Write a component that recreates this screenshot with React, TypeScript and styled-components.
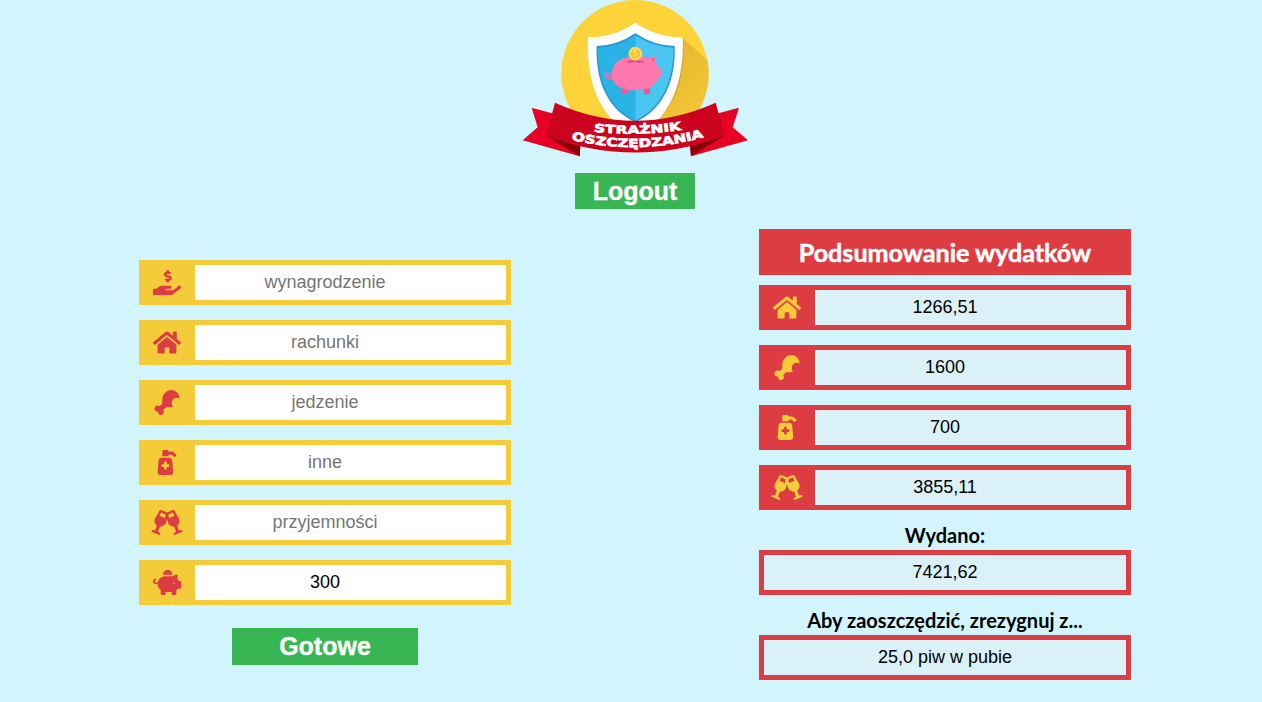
import React from "react";
import styled, { createGlobalStyle } from "styled-components";
import {
  FaDrumstickBite,
  FaGlassCheers,
  FaHandHoldingUsd,
  FaHome,
  FaPiggyBank,
  FaPumpMedical,
} from "react-icons/fa";

const RED = "#de3c43";
const YELLOW = "#f4cb39";
const GREEN = "#38b653";

const GlobalStyle = createGlobalStyle`
  *, *::before, *::after { box-sizing: border-box; }
  html { overflow: hidden; }
  body {
    margin: 0;
    background: #d2f4fd;
    color: #000;
    font-family: Lato, sans-serif;
  }
`;

const Page = styled.div`
  width: 1262px;
  height: 702px;
  padding-left: 15px;
  overflow: hidden;
`;

const Header = styled.header`
  display: flex;
  flex-direction: column;
  align-items: center;
  width: 1240px;
`;

const LogoImage = styled.svg`
  display: block;
  width: 240px;
  height: 160px;
`;

const Button = styled.button<{ $width: number; $height: number }>`
  display: flex;
  align-items: center;
  justify-content: center;
  width: ${(p) => p.$width}px;
  height: ${(p) => p.$height}px;
  padding: 0;
  border: 0;
  background: ${GREEN};
  color: #fff;
  font: bold 25px "Liberation Sans", Arial, sans-serif;
  -webkit-text-stroke: 0.3px #fff;
`;

const LogoutButton = styled(Button)`
  margin-top: 13px;
`;

const SubmitButton = styled(Button)`
  margin: 23px auto 0;
`;

const Columns = styled.main`
  display: grid;
  grid-template-columns: 620px 620px;
`;

const Form = styled.form`
  width: 372px;
  margin: 51px auto 0;
`;

const Summary = styled.section`
  width: 372px;
  margin: 20px auto 0;
`;

const SummaryTitle = styled.h2`
  margin: 0 0 10px;
  height: 46px;
  background: ${RED};
  color: #fff;
  font-size: 25.1px;
  font-weight: 700;
  line-height: 47px;
  text-align: center;
  -webkit-text-stroke: 0.5px #fff;
`;

const Row = styled.label<{ $frame: string; $icon: string }>`
  display: flex;
  height: 45px;
  margin-bottom: 15px;
  border: 5px solid ${(p) => p.$frame};
  color: ${(p) => p.$icon};
`;

const IconCell = styled.span<{ $frame: string }>`
  display: flex;
  flex: 0 0 51px;
  align-items: center;
  justify-content: center;
  padding-right: 5px;
  background: ${(p) => p.$frame};

  svg {
    flex: none;
    width: 32px;
    height: 25px;
  }
`;

const Field = styled.input`
  flex: 1;
  min-width: 0;
  height: 35px;
  padding: 0 51px 1px 0;
  border: 0;
  border-radius: 0;
  outline: 0;
  background: #fff;
  color: #000;
  font: 18px "Liberation Sans", Arial, sans-serif;
  text-align: center;

  &::placeholder {
    color: #757575;
    opacity: 1;
  }
`;

const Amount = styled.output<{ $wide?: boolean }>`
  flex: 1;
  height: 35px;
  padding-right: ${(p) => (p.$wide ? 0 : 51)}px;
  background: #dbf1f8;
  color: #000;
  font: 18px/34px "Liberation Sans", Arial, sans-serif;
  text-align: center;
`;

const ResultLabel = styled.h3`
  height: 25px;
  margin: 0;
  font-size: 20px;
  font-weight: 700;
  line-height: 20px;
  text-align: center;
`;

const fields = [
  { Icon: FaHandHoldingUsd, placeholder: "wynagrodzenie" },
  { Icon: FaHome, placeholder: "rachunki" },
  { Icon: FaDrumstickBite, placeholder: "jedzenie" },
  { Icon: FaPumpMedical, placeholder: "inne" },
  { Icon: FaGlassCheers, placeholder: "przyjemności" },
  { Icon: FaPiggyBank, placeholder: "oszczędności", value: "300" },
];

const expenses = [
  { Icon: FaHome, amount: "1266,51" },
  { Icon: FaDrumstickBite, amount: "1600" },
  { Icon: FaPumpMedical, amount: "700" },
  { Icon: FaGlassCheers, amount: "3855,11" },
];

const results = [
  { label: "Wydano:", amount: "7421,62" },
  { label: "Aby zaoszczędzić, zrezygnuj z...", amount: "25,0 piw w pubie" },
];

function Logo() {
  return (
    <LogoImage viewBox="0 0 720 480" role="img" aria-label="Strażnik oszczędzania">
      <defs>
        <clipPath id="disc">
          <circle cx="360" cy="221" r="221" />
        </clipPath>
        <linearGradient id="shade" x1="0" y1="0" x2="1" y2="1">
          <stop offset="0" stopColor="#e3b22f" />
          <stop offset="1" stopColor="#f8cf39" />
        </linearGradient>
        <path id="arcTop" d="M236 395 Q368 410 500 389" />
        <path id="arcBottom" d="M169 419 Q368 468 568 411" />
      </defs>
      <circle cx="360" cy="221" r="221" fill="#fcd43a" />
      <path d="M503 114 L650 246 L560 440 L370 440 Z" fill="url(#shade)" clipPath="url(#disc)" />
      <path d="M505 116 C511 240 480 320 405 382 L360 400 L490 200 Z" fill="#d69a2c" />
      <path d="M361 68 Q425 112 503 112 C509 232 474 322 415 374 L361 400 L307 374 C248 322 213 232 219 112 Q297 112 361 68Z" fill="#fff" />
      <path d="M361 100 Q416 137 479 138 C483 240 447 326 361 367 C275 326 241 240 245 138 Q306 137 361 100Z" fill="#2997d3" />
      <path d="M361 106 Q308 142 249 143 C247 240 280 322 361 362Z" fill="#2ab4e5" />
      <path d="M361 106 Q414 142 475 143 C477 240 442 322 361 362Z" fill="#49c6f1" />
      <path d="M321 260 L317 278 Q318 282 324 283 L337 283 L344 264Z M383 265 L389 283 L401 283 Q407 281 406 276 L401 256Z" fill="#e45d99" />
      <path d="M296 234 C286 240 275 232 275 225 C277 217 290 221 286 230 C283 239 274 236 273 226 C273 221 270 219 266 220" fill="none" stroke="#f16ea6" strokeWidth="5" />
      <path d="M291 224 C290 187 320 169 364 169 C384 169 396 170 403 173 L424 167 Q425 178 421 189 Q430 196 433 205 L439 207 Q442 210 442 219 Q442 228 437 230 Q430 229 429 237 C418 257 401 271 362 271 C319 271 292 257 291 224Z" fill="#fe78ac" />
      <path d="M409 178 L419 172 L417 185Z" fill="#e45d99" />
      <path d="M333 187 Q341 180 360 180 Q381 180 389 188 Q370 190 361 185 Q351 190 333 187Z" fill="#d84f8d" />
      <circle cx="361" cy="161" r="21" fill="#f8c433" />
      <circle cx="361" cy="161" r="17" fill="none" stroke="#ffe26c" strokeWidth="4" />
      <text x="361" y="169" textAnchor="middle" fontFamily="Lato, sans-serif" fontSize="23" fontWeight="700" fill="#ffe565">$</text>
      <path d="M50 323 L150 350 L196 438 L194 469 L23 421 L68 382Z" fill="#e70323" />
      <path d="M672 323 L570 350 L526 438 L528 469 L699 421 L653 382Z" fill="#e70323" />
      <path d="M94 407 L196 438 L194 469Z" fill="#870007" />
      <path d="M628 407 L525 438 L528 469Z" fill="#870007" />
      <path d="M120 308 Q360 416 602 308 L629 407 Q360 508 93 407Z" fill="#cb031e" />
      <g fill="#fff" stroke="#fff" strokeWidth="2" fontFamily="'DejaVu Sans', sans-serif" fontWeight="700">
        <text fontSize="34" textLength="264" lengthAdjust="spacingAndGlyphs">
          <textPath href="#arcTop" textLength="264" lengthAdjust="spacingAndGlyphs">STRAŻNIK</textPath>
        </text>
        <text fontSize="35" textLength="402" lengthAdjust="spacingAndGlyphs">
          <textPath href="#arcBottom" textLength="402" lengthAdjust="spacingAndGlyphs">OSZCZĘDZANIA</textPath>
        </text>
      </g>
    </LogoImage>
  );
}

export default function App() {
  return (
    <>
      <GlobalStyle />
      <Page>
        <Header>
          <Logo />
          <LogoutButton type="button" $width={120} $height={36}>
            Logout
          </LogoutButton>
        </Header>
        <Columns>
          <Form>
            {fields.map(({ Icon, placeholder, value }) => (
              <Row key={placeholder} $frame={YELLOW} $icon={RED}>
                <IconCell $frame={YELLOW}>
                  <Icon />
                </IconCell>
                <Field placeholder={placeholder} defaultValue={value} />
              </Row>
            ))}
            <SubmitButton type="button" $width={186} $height={37}>
              Gotowe
            </SubmitButton>
          </Form>
          <Summary>
            <SummaryTitle>Podsumowanie wydatków</SummaryTitle>
            {expenses.map(({ Icon, amount }) => (
              <Row key={amount} as="div" $frame={RED} $icon={YELLOW}>
                <IconCell $frame={RED}>
                  <Icon />
                </IconCell>
                <Amount>{amount}</Amount>
              </Row>
            ))}
            {results.map(({ label, amount }) => (
              <React.Fragment key={label}>
                <ResultLabel>{label}</ResultLabel>
                <Row as="div" $frame={RED} $icon={YELLOW}>
                  <Amount $wide>{amount}</Amount>
                </Row>
              </React.Fragment>
            ))}
          </Summary>
        </Columns>
      </Page>
    </>
  );
}
